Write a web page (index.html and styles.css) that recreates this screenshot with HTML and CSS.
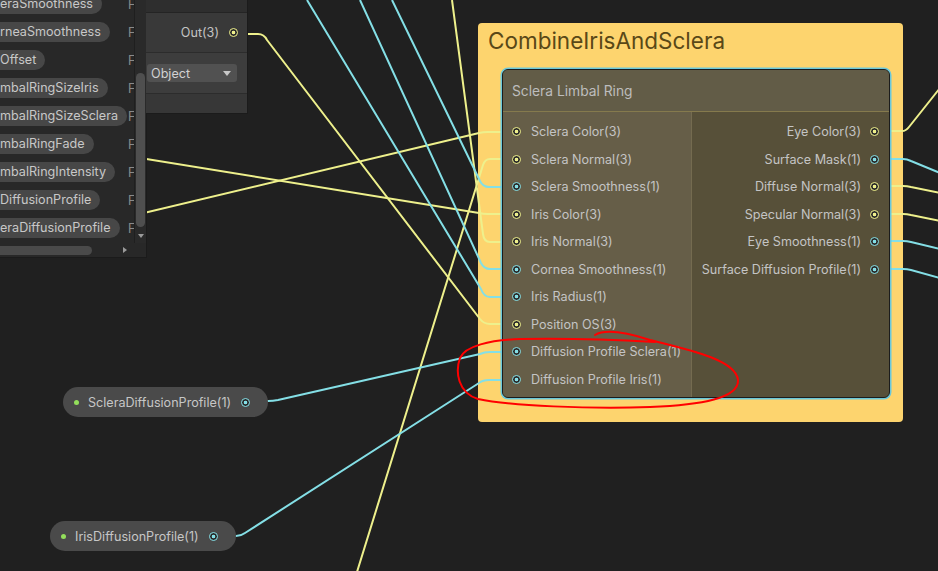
FILE: index.html
```html
<!DOCTYPE html>
<html lang="en">
<head>
    <meta charset="UTF-8">
    <meta name="viewport" content="width=device-width, initial-scale=1.0">
    <title>Shader Graph</title>
    <link rel="stylesheet" href="styles.css">
</head>
<body>
<div class="graph">

    <!-- blackboard (scrolled to the right, names cut off) -->
    <div class="blackboard">
        <div class="bb-main">
            <ul class="props">
                <li><span class="pill">eraSmoothness</span><span class="type">F</span></li>
                <li><span class="pill">rneaSmoothness</span><span class="type">F</span></li>
                <li><span class="pill">Offset</span><span class="type">F</span></li>
                <li><span class="pill">mbalRingSizeIris</span><span class="type">F</span></li>
                <li><span class="pill">mbalRingSizeSclera</span><span class="type">F</span></li>
                <li><span class="pill">mbalRingFade</span><span class="type">F</span></li>
                <li><span class="pill">mbalRingIntensity</span><span class="type">F</span></li>
                <li><span class="pill">DiffusionProfile</span><span class="type">F</span></li>
                <li><span class="pill">eraDiffusionProfile</span><span class="type">F</span></li>
            </ul>
            <div class="vscroll">
                <div class="vthumb"></div>
                <div class="arrow down"></div>
            </div>
        </div>
        <div class="hscroll">
            <div class="hthumb"></div>
            <div class="arrow right"></div>
        </div>
    </div>

    <!-- position node, partly hidden -->
    <div class="node-mini">
        <div class="mini-top"></div>
        <div class="mini-out"><span>Out(3)</span><span class="port v3"></span></div>
        <div class="mini-opts">
            <div class="dropdown"><span>Object</span><span class="caret"></span></div>
        </div>
        <div class="mini-foot"></div>
    </div>

    <div class="group">
        <div class="group-title">CombineIrisAndSclera</div>
        <div class="node">
            <div class="node-title">Sclera Limbal Ring</div>
            <div class="node-body">
                <ul class="inputs">
                    <li><span class="port v3"></span>Sclera Color(3)</li>
                    <li><span class="port v3"></span>Sclera Normal(3)</li>
                    <li><span class="port v1"></span>Sclera Smoothness(1)</li>
                    <li><span class="port v3"></span>Iris Color(3)</li>
                    <li><span class="port v3"></span>Iris Normal(3)</li>
                    <li><span class="port v1"></span>Cornea Smoothness(1)</li>
                    <li><span class="port v1"></span>Iris Radius(1)</li>
                    <li><span class="port v3"></span>Position OS(3)</li>
                    <li><span class="port v1"></span>Diffusion Profile Sclera(1)</li>
                    <li><span class="port v1"></span>Diffusion Profile Iris(1)</li>
                </ul>
                <ul class="outputs">
                    <li>Eye Color(3)<span class="port v3"></span></li>
                    <li>Surface Mask(1)<span class="port v1"></span></li>
                    <li>Diffuse Normal(3)<span class="port v3"></span></li>
                    <li>Specular Normal(3)<span class="port v3"></span></li>
                    <li>Eye Smoothness(1)<span class="port v1"></span></li>
                    <li>Surface Diffusion Profile(1)<span class="port v1"></span></li>
                </ul>
            </div>
        </div>
    </div>

    <div class="prop sclera"><span class="dot"></span>ScleraDiffusionProfile(1)<span class="port v1"></span></div>
    <div class="prop iris"><span class="dot"></span>IrisDiffusionProfile(1)<span class="port v1"></span></div>

    <!-- edges -->
    <svg class="wires" width="938" height="571" fill="none" stroke-width="2" stroke-linejoin="round">
        <g stroke="#eef08c">
            <path d="M60 233 L479 133 Q483 132 488 132 L516 132"/>
            <path d="M357 572 L483 165 Q485 159 490 159 L516 159"/>
            <path d="M60 145 L479 213 Q483 214 488 214 L516 214"/>
            <path d="M452 0 L483 234 Q484 242 490 242 L516 242"/>
            <path d="M237 34 L258 34 Q264 34 267 40 L480 319 Q484 324 490 324 L516 324"/>
            <path d="M879 131 L902 131 Q906 131 909 127 L940 88"/>
            <path d="M879 186 L903 186 Q907 186 911 187 L940 193"/>
            <path d="M879 214 L903 214 Q907 214 911 215 L940 221"/>
        </g>
        <g stroke="#84dfe6">
            <path d="M392 0 L480 181 Q483 187 489 187 L516 187"/>
            <path d="M360 0 L481 263 Q484 269 490 269 L516 269"/>
            <path d="M307 0 L481 289 Q484 297 490 297 L516 297"/>
            <path d="M251 401 L268 401 Q273 401 278 400 L480 354 Q484 352 490 352 L516 352"/>
            <path d="M217 536 L236 536 Q241 536 245 533 L479 383 Q483 380 489 380 L516 380"/>
            <path d="M879 159 L903 159 Q907 159 911 161 L940 173"/>
            <path d="M879 241 L903 241 Q907 241 911 242 L940 249"/>
            <path d="M879 269 L903 269 Q907 269 911 270 L940 278"/>
        </g>
    </svg>

    <!-- hand drawn markup -->
    <svg class="markup" width="938" height="571" fill="none">
        <path stroke="#ff0000" stroke-width="2" stroke-linecap="round"
              d="M595 335 C605 329 625 332 650 340 C690 350 736 360 738 380 C739 398 702 405 650 407 C590 409 510 406 478 399 C458 393 455 372 460 358 C465 346 490 340 520 339 C570 338 620 340 655 342"/>
    </svg>
</div>
</body>
</html>
```

FILE: styles.css
```css
* {
    box-sizing: border-box;
}
body {
    margin: 0;
    background: #202020;
    font-family: "Inter", "Noto Sans", sans-serif;
    font-size: 12.6px;
    color: #c4c4c4;
}
ul {
    list-style: none;
    margin: 0;
    padding: 0;
}
.graph {
    position: relative;
    width: 938px;
    height: 571px;
    overflow: hidden;
    background: #202020;
}
.wires,
.markup {
    position: absolute;
    left: 0;
    top: 0;
}
.wires {
    z-index: 1;
}
.markup {
    z-index: 5;
}

/* blackboard */
.blackboard {
    position: absolute;
    left: 0;
    top: 0;
    z-index: 2;
    width: 147px;
    height: 258px;
    display: flex;
    flex-direction: column;
    background: #282828;
    border-right: 1px solid #1b1b1b;
    border-bottom: 1px solid #1b1b1b;
}
.bb-main {
    flex: 1;
    display: flex;
    overflow: hidden;
}
.props {
    width: 134px;
    margin-top: -10px;
    overflow: hidden;
}
.props li {
    height: 28px;
    display: grid;
    grid-template-columns: 128px 6px;
    align-items: center;
}
.pill {
    justify-self: start;
    height: 20px;
    line-height: 20px;
    margin-left: -12px;
    padding: 0 9px 0 12px;
    border-radius: 10px;
    background: #474747;
    color: #c8c8c8;
    white-space: nowrap;
}
.type {
    white-space: nowrap;
    color: #8a8a8a;
}
.vscroll {
    width: 12px;
    display: flex;
    flex-direction: column;
    align-items: center;
    padding-top: 73px;
    background: #2a2a2a;
    border-left: 1px solid #1f1f1f;
}
.vthumb {
    width: 9px;
    height: 154px;
    border-radius: 5px;
    background: #4f4f4f;
}
.arrow {
    width: 0;
    height: 0;
}
.arrow.down {
    margin-top: 7px;
    border-left: 3.5px solid transparent;
    border-right: 3.5px solid transparent;
    border-top: 4px solid #9a9a9a;
}
.hscroll {
    height: 14px;
    display: flex;
    align-items: center;
}
.hthumb {
    width: 92px;
    height: 9px;
    border-radius: 0 5px 5px 0;
    background: #4a4a4a;
}
.arrow.right {
    margin-left: 31px;
    border-top: 3.5px solid transparent;
    border-bottom: 3.5px solid transparent;
    border-left: 4px solid #9a9a9a;
}

/* position node */
.node-mini {
    position: absolute;
    left: 146px;
    top: 0;
    z-index: 2;
    width: 102px;
    height: 114px;
    background: #383838;
    border-bottom: 1px solid #1b1b1b;
    border-right: 1px solid #1b1b1b;
}
.mini-top {
    height: 13px;
    background: #2e2e2e;
    border-bottom: 1px solid #242424;
}
.mini-out {
    height: 39px;
    display: flex;
    justify-content: flex-end;
    align-items: center;
    gap: 10px;
    padding-right: 9px;
    background: #393939;
}
.mini-opts {
    height: 41px;
    padding: 11px 10px 0 1px;
    background: #3d3d3d;
    border-top: 1px solid #2c2c2c;
}
.dropdown {
    height: 18px;
    display: flex;
    align-items: center;
    justify-content: space-between;
    padding: 0 6px 0 4px;
    border-radius: 3px;
    background: #515151;
    color: #d2d2d2;
}
.caret {
    border-left: 4px solid transparent;
    border-right: 4px solid transparent;
    border-top: 5px solid #c8c8c8;
}
.mini-foot {
    height: 20px;
    background: #373737;
    border-top: 1px solid #2c2c2c;
}

/* group + subgraph node */
.group {
    position: absolute;
    left: 478px;
    top: 23px;
    width: 425px;
    height: 399px;
    padding: 0 13px 0 24px;
    background: #fdd46e;
    border-radius: 4px;
}
.group-title {
    height: 46px;
    margin-left: -14px;
    padding-top: 3px;
    font-size: 22.5px;
    line-height: 30px;
    color: #594817;
}
.node {
    position: relative;
    z-index: 3;
    width: 388px;
    height: 329px;
    display: flex;
    flex-direction: column;
    overflow: hidden;
    background: #575039;
    border: 1px solid #1c1c1c;
    border-radius: 6px;
    box-shadow: 0 0 0 1.5px #6ac8db;
}
.node-title {
    flex: none;
    height: 42px;
    display: flex;
    align-items: center;
    padding: 0 9px;
    background: #625c47;
    border-bottom: 1px solid #857a4d;
    font-size: 13.8px;
    color: #bdbdbd;
}
.node-body {
    flex: 1;
    display: flex;
}
.inputs {
    width: 189px;
    padding-top: 6px;
    background: #665e48;
    border-right: 1px solid #746b50;
}
.outputs {
    flex: 1;
    padding-top: 6px;
}
.inputs li,
.outputs li {
    height: 27.5px;
    display: flex;
    align-items: center;
    white-space: nowrap;
}
.inputs li {
    gap: 10px;
    padding-left: 9px;
}
.outputs li {
    justify-content: flex-end;
    gap: 9px;
    padding-right: 10px;
}

/* ports */
.port {
    flex: none;
    width: 9px;
    height: 9px;
    border-radius: 50%;
    border: 1.5px solid currentColor;
    background: radial-gradient(circle, currentColor 0 1.6px, #2a2a2a 2.1px);
}
.v3 {
    color: #eef08c;
}
.v1 {
    color: #84dfe6;
}

/* property nodes */
.prop {
    position: absolute;
    z-index: 2;
    height: 30px;
    display: flex;
    align-items: center;
    padding: 0 18px 0 11px;
    border-radius: 15px;
    background: #4a4a4a;
    color: #c6c6c6;
    white-space: nowrap;
}
.prop .dot {
    width: 5px;
    height: 5px;
    margin-right: 9px;
    border-radius: 50%;
    background: #93df5b;
}
.prop .port {
    margin-left: 10px;
}
.prop.sclera {
    left: 63px;
    top: 387px;
}
.prop.iris {
    left: 50px;
    top: 521px;
}
```
